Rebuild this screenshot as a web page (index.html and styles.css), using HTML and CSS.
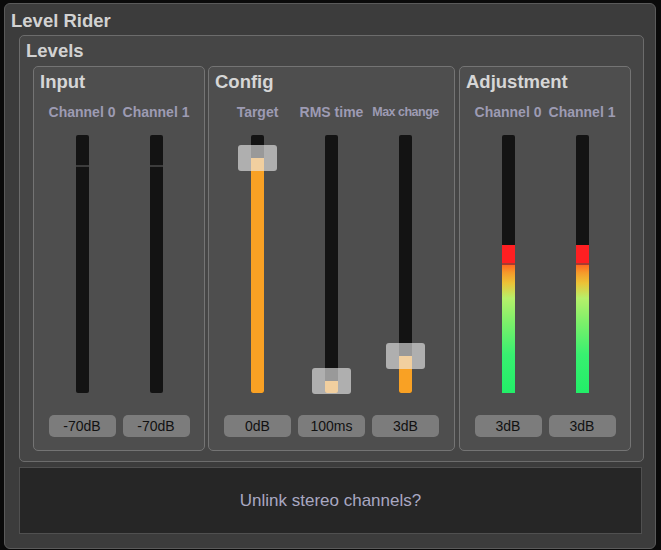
FILE: index.html
```html
<!DOCTYPE html>
<html>
<head>
<meta charset="utf-8">
<link rel="stylesheet" href="styles.css">
</head>
<body>
<div class="window">
  <div class="title">Level Rider</div>
  <div class="levels">
    <div class="levels-title">Levels</div>
    <div class="panels">
      <div class="panel panel-small">
        <div class="panel-title">Input</div>
        <div class="cols">
          <div class="col">
            <div class="label">Channel 0</div>
            <div class="track"><div class="tick"></div></div>
            <div class="value">-70dB</div>
          </div>
          <div class="col">
            <div class="label">Channel 1</div>
            <div class="track"><div class="tick"></div></div>
            <div class="value">-70dB</div>
          </div>
        </div>
      </div>
      <div class="panel panel-config">
        <div class="panel-title">Config</div>
        <div class="cols">
          <div class="col">
            <div class="label">Target</div>
            <div class="track">
              <div class="fill" style="height:235px"></div>
              <div class="handle" style="top:10px"></div>
            </div>
            <div class="value">0dB</div>
          </div>
          <div class="col">
            <div class="label">RMS time</div>
            <div class="track">
              <div class="fill" style="height:12px"></div>
              <div class="handle" style="top:233px"></div>
            </div>
            <div class="value">100ms</div>
          </div>
          <div class="col">
            <div class="label label-narrow">Max change</div>
            <div class="track">
              <div class="fill" style="height:37px"></div>
              <div class="handle" style="top:208px"></div>
            </div>
            <div class="value">3dB</div>
          </div>
        </div>
      </div>
      <div class="panel panel-small">
        <div class="panel-title">Adjustment</div>
        <div class="cols">
          <div class="col">
            <div class="label">Channel 0</div>
            <div class="track">
              <div class="level" style="height:148px"><div class="clip"></div><div class="grad"></div></div>
            </div>
            <div class="value">3dB</div>
          </div>
          <div class="col">
            <div class="label">Channel 1</div>
            <div class="track">
              <div class="level" style="height:148px"><div class="clip"></div><div class="grad"></div></div>
            </div>
            <div class="value">3dB</div>
          </div>
        </div>
      </div>
    </div>
  </div>
  <div class="unlink">Unlink stereo channels?</div>
</div>
</body>
</html>
```

FILE: styles.css
```css
html, body {
  margin: 0;
  padding: 0;
  background: #0a0a0a;
  font-family: "Liberation Sans", Arial, sans-serif;
}
body {
  width: 661px;
  height: 550px;
  overflow: hidden;
  padding-top: 3px;
  padding-left: 4px;
  box-sizing: border-box;
}
.window {
  width: 652px;
  height: 546px;
  box-sizing: border-box;
  border: 1px solid #5a5a5a;
  border-radius: 6px;
  background: #3c3c3c;
  display: flex;
  flex-direction: column;
}
.title {
  color: #d2d2d2;
  font-weight: bold;
  font-size: 18.5px;
  line-height: 20px;
  padding-left: 6px;
  margin-top: 7px;
  height: 20px;
}
.levels {
  margin-top: 4px;
  margin-left: 14px;
  width: 625px;
  height: 427px;
  box-sizing: border-box;
  border: 1px solid #6c6c6c;
  border-radius: 5px;
  background: #464646;
  display: flex;
  flex-direction: column;
}
.levels-title {
  color: #d2d2d2;
  font-weight: bold;
  font-size: 18.5px;
  line-height: 20px;
  padding-left: 6px;
  margin-top: 5px;
  height: 20px;
}
.panels {
  display: flex;
  margin-top: 5px;
  margin-left: 13px;
  gap: 3px;
}
.panel {
  height: 385px;
  box-sizing: border-box;
  border: 1px solid #747474;
  border-radius: 5px;
  background: #4e4e4e;
  display: flex;
  flex-direction: column;
}
.panel-small { width: 172px; }
.panel-config { width: 247px; margin-right: 1px; }
.panel-title {
  color: #d6d6d6;
  font-weight: bold;
  font-size: 18.5px;
  line-height: 20px;
  padding-left: 6px;
  margin-top: 5px;
  height: 20px;
}
.cols {
  display: flex;
  justify-content: center;
  gap: 7px;
  margin-top: 12px;
}
.col {
  width: 67px;
  display: flex;
  flex-direction: column;
  align-items: center;
}
.label {
  color: #9d9bb3;
  font-weight: bold;
  font-size: 14px;
  line-height: 16px;
  height: 16px;
  white-space: nowrap;
}
.label-narrow {
  font-size: 12.5px;
  letter-spacing: -0.5px;
}
.track {
  position: relative;
  margin-top: 15px;
  width: 13px;
  height: 258px;
  background: #131313;
  border-radius: 2px;
  display: flex;
  flex-direction: column;
  justify-content: flex-end;
}
.tick {
  position: absolute;
  left: 0;
  right: 0;
  top: 30px;
  height: 2px;
  background: #3c3c3c;
}
.fill {
  background: #f9a124;
  border-radius: 0 0 2px 2px;
}
.handle {
  position: absolute;
  left: -13px;
  width: 39px;
  height: 26px;
  border-radius: 3px;
  background: rgba(236, 236, 236, 0.62);
}
.level {
  display: flex;
  flex-direction: column;
}
.clip {
  height: 18px;
  background: #ff1f22;
  border-bottom: 2px solid #a83a30;
}
.grad {
  flex: 1;
  background: linear-gradient(to bottom, #ff6a20 0%, #f59a2a 6%, #ecc236 14%, #b6f06a 26%, #7cf06a 45%, #38f070 70%, #22ee68 100%);
}
.value {
  margin-top: 22px;
  width: 67px;
  height: 22px;
  border-radius: 5px;
  background: #7c7c7c;
  color: #111;
  font-size: 14px;
  line-height: 22px;
  text-align: center;
}
.unlink {
  margin-top: 5px;
  margin-left: 14px;
  width: 623px;
  height: 67px;
  box-sizing: border-box;
  border: 1px solid #505050;
  background: #262626;
  color: #a9a8c2;
  font-size: 17px;
  display: flex;
  align-items: center;
  justify-content: center;
}
```
